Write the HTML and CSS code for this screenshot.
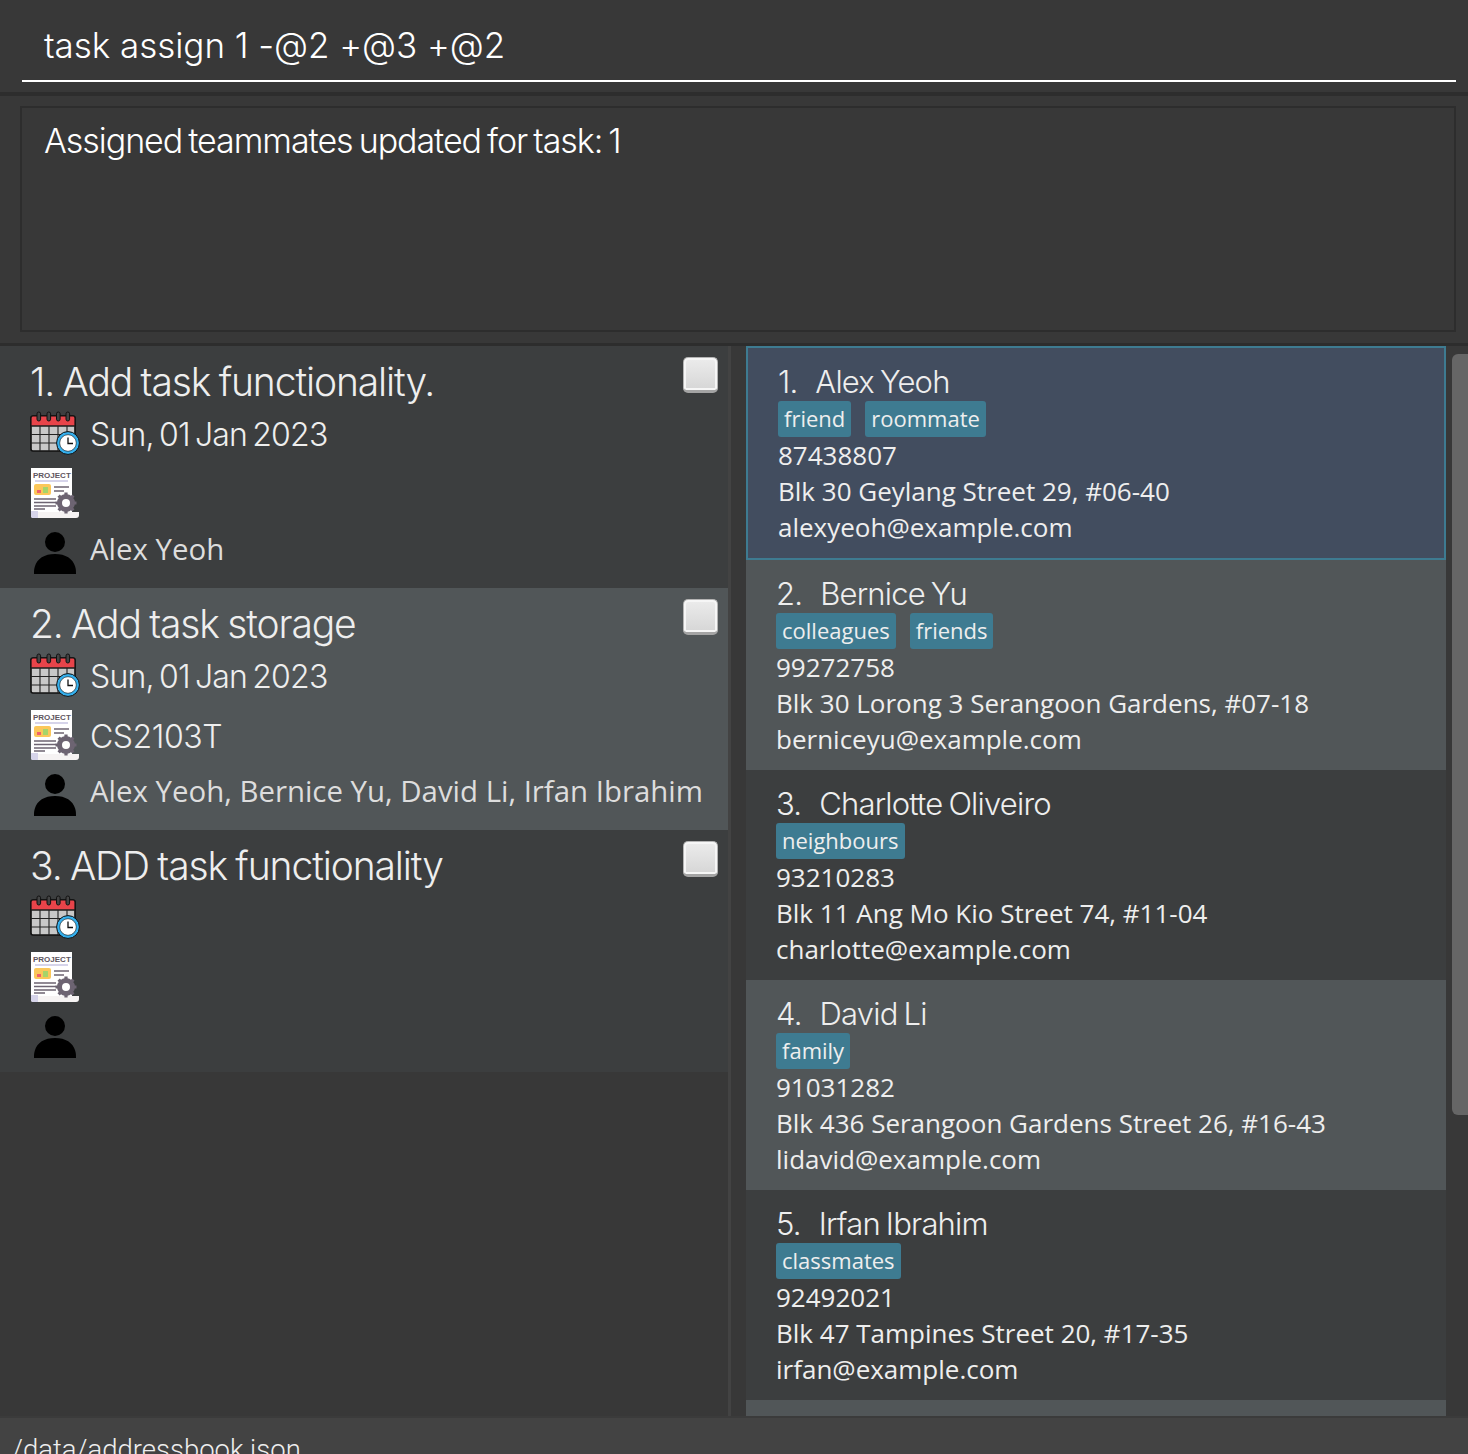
FILE: index.html
```html
<!DOCTYPE html>
<html lang="en">
<head>
<meta charset="utf-8">
<title>Task list</title>
<link rel="stylesheet" href="styles.css">
</head>
<body>
<svg class="defs" width="0" height="0" aria-hidden="true">
  <symbol id="cal" viewBox="0 0 50 44">
    <rect x="1" y="5" width="44" height="35" rx="2" fill="#c8c8c8" stroke="#111" stroke-width="1.600"/>
    <path d="M1 15V7a2 2 0 0 1 2-2h40a2 2 0 0 1 2 2v8z" fill="#e8444a" stroke="#111" stroke-width="1.200"/>
    <path d="M1 15h44M1 23.500h44M1 32h44M10 15v25M19 15v25M28 15v25M37 15v25" stroke="#222" stroke-width="1.100" fill="none"/>
    <g fill="#444" stroke="#111" stroke-width="1"><rect x="7" y="1" width="3.600" height="9" rx="1.800"/><rect x="17" y="1" width="3.600" height="9" rx="1.800"/><rect x="26.500" y="1" width="3.600" height="9" rx="1.800"/><rect x="36" y="1" width="3.600" height="9" rx="1.800"/></g>
    <circle cx="38" cy="32" r="11.400" fill="#35b0ee" stroke="#111" stroke-width="1"/>
    <circle cx="38" cy="32" r="8.300" fill="#fff" stroke="#111" stroke-width="0.600"/>
    <path d="M38 26.500v6h5" fill="none" stroke="#111" stroke-width="1.300"/>
  </symbol>
  <symbol id="proj" viewBox="0 0 48 50">
    <path d="M0 0h41v44H0z" fill="#fff"/>
    <path d="M0 44h48v3a3 3 0 0 1-3 3H2a2 2 0 0 1-2-2z" fill="#f6f3f3"/>
    <path d="M0 43h7v7H2a2 2 0 0 1-2-2z" fill="#d6d4ea"/>
    <rect x="4" y="12" width="33" height="2" fill="#d6d4ea"/>
    <rect x="3" y="16" width="17" height="11" rx="2" fill="#fbc75a"/>
    <rect x="6" y="22" width="4" height="3" fill="#f0606a"/>
    <rect x="12" y="19" width="5" height="6" fill="#a6d46a"/>
    <path d="M23 19h15M23 23h10M3 31h22M3 34.500h22M3 38h22M3 41h11" stroke="#6d6472" stroke-width="1.300"/>
    <circle cx="35" cy="35" r="6.500" fill="none" stroke="#6d6472" stroke-width="5"/>
    <path d="M35 24.500v4M35 41.500v4M24.500 35h4M41.500 35h4M27.600 27.600l2.800 2.800M39.600 39.600l2.800 2.800M42.400 27.600l-2.800 2.800M30.400 39.600l-2.800 2.800" stroke="#6d6472" stroke-width="3.200"/>
  </symbol>
  <symbol id="user" viewBox="0 0 44 44">
    <circle cx="22" cy="10.500" r="10.500" fill="#000"/>
    <path d="M0 44c0-3 0-5 1-8 2-8 10-13 21-13s19 5 21 13c1 3 1 5 1 8z" fill="#000"/>
  </symbol>
</svg>

<main class="app">
  <section class="command">
    <div class="command-text">task assign 1 -@2 +@3 +@2</div>
  </section>

  <section class="result">
    <div class="result-box">Assigned teammates updated for task: 1</div>
  </section>

  <section class="lists">
    <div class="tasks">
      <article class="task">
        <div class="task-main">
          <h2 class="task-title">1. Add task functionality.</h2>
          <div class="task-row row-date"><svg class="ic-cal"><use href="#cal"/></svg><span class="date">Sun, 01 Jan 2023</span></div>
          <div class="task-row row-proj"><svg class="ic-proj" viewBox="0 0 48 50"><use href="#proj"/><text x="2" y="10" class="proj-text">PROJECT</text></svg></div>
          <div class="task-row row-user"><svg class="ic-user"><use href="#user"/></svg><span class="people">Alex Yeoh</span></div>
        </div>
        <span class="check"></span>
      </article>
      <article class="task even">
        <div class="task-main">
          <h2 class="task-title">2. Add task storage</h2>
          <div class="task-row row-date"><svg class="ic-cal"><use href="#cal"/></svg><span class="date">Sun, 01 Jan 2023</span></div>
          <div class="task-row row-proj"><svg class="ic-proj" viewBox="0 0 48 50"><use href="#proj"/><text x="2" y="10" class="proj-text">PROJECT</text></svg><span class="date code">CS2103T</span></div>
          <div class="task-row row-user"><svg class="ic-user"><use href="#user"/></svg><span class="people">Alex Yeoh, Bernice Yu, David Li, Irfan Ibrahim</span></div>
        </div>
        <span class="check"></span>
      </article>
      <article class="task">
        <div class="task-main">
          <h2 class="task-title">3. ADD task functionality</h2>
          <div class="task-row row-date"><svg class="ic-cal"><use href="#cal"/></svg></div>
          <div class="task-row row-proj"><svg class="ic-proj" viewBox="0 0 48 50"><use href="#proj"/><text x="2" y="10" class="proj-text">PROJECT</text></svg></div>
          <div class="task-row row-user"><svg class="ic-user"><use href="#user"/></svg></div>
        </div>
        <span class="check"></span>
      </article>
    </div>

    <div class="persons">
      <article class="person selected">
        <h3 class="person-name"><span>1.</span><span>Alex Yeoh</span></h3>
        <div class="tags"><span class="tag">friend</span><span class="tag">roommate</span></div>
        <p class="line">87438807</p>
        <p class="line">Blk 30 Geylang Street 29, #06-40</p>
        <p class="line">alexyeoh@example.com</p>
      </article>
      <article class="person even">
        <h3 class="person-name"><span>2.</span><span>Bernice Yu</span></h3>
        <div class="tags"><span class="tag">colleagues</span><span class="tag">friends</span></div>
        <p class="line">99272758</p>
        <p class="line">Blk 30 Lorong 3 Serangoon Gardens, #07-18</p>
        <p class="line">berniceyu@example.com</p>
      </article>
      <article class="person">
        <h3 class="person-name"><span>3.</span><span>Charlotte Oliveiro</span></h3>
        <div class="tags"><span class="tag">neighbours</span></div>
        <p class="line">93210283</p>
        <p class="line">Blk 11 Ang Mo Kio Street 74, #11-04</p>
        <p class="line">charlotte@example.com</p>
      </article>
      <article class="person even">
        <h3 class="person-name"><span>4.</span><span>David Li</span></h3>
        <div class="tags"><span class="tag">family</span></div>
        <p class="line">91031282</p>
        <p class="line">Blk 436 Serangoon Gardens Street 26, #16-43</p>
        <p class="line">lidavid@example.com</p>
      </article>
      <article class="person">
        <h3 class="person-name"><span>5.</span><span>Irfan Ibrahim</span></h3>
        <div class="tags"><span class="tag">classmates</span></div>
        <p class="line">92492021</p>
        <p class="line">Blk 47 Tampines Street 20, #17-35</p>
        <p class="line">irfan@example.com</p>
      </article>
      <article class="person even"></article>
    </div>

    <div class="scrolltrack"><div class="scrollthumb"></div></div>
  </section>

  <footer class="status">/data/addressbook.json</footer>
</main>
</body>
</html>
```
FILE: styles.css
```css
* { box-sizing: border-box; }
html, body { margin: 0; padding: 0; background: #383838; }
.defs { display: none; }
.proj-text { font: 700 8px "Liberation Sans", sans-serif; fill: #5e5560; }
.app {
  width: 1468px; height: 1454px; overflow: hidden;
  display: flex; flex-direction: column;
  background: #383838; color: #fff;
  font-family: "Inter", sans-serif;
}
.command {
  height: 96px; flex: none; padding: 0 12px 0 22px;
  border-bottom: 4px solid #2d2d2d;
}
.command-text {
  height: 82px; padding: 22px 0 0 22px;
  border-bottom: 2px solid #fff;
  font: 300 35px/46px "Inter", sans-serif;
  letter-spacing: -0.05px; color: #fff;
}
.result {
  height: 250px; flex: none; padding: 10px 12px 10px 20px;
  border-bottom: 3px solid #2d2d2d;
}
.result-box {
  height: 226px; border: 2px solid #2d2d2d;
  padding: 13px 0 0 22px;
  font: 300 34px/40px "Inter", sans-serif;
  letter-spacing: -1.05px; word-spacing: -2.4px; color: #fff;
}
.lists { flex: 1; min-height: 0; display: flex; align-items: stretch; }
.tasks {
  width: 731px; flex: none; border-right: 3px solid #434343;
  padding-top: 0;
}
.task {
  height: 242px; display: flex; justify-content: space-between;
  padding: 0 10px 0 30px; background: #3c3e3f;
}
.task.even { background: #515658; }
.task-main { min-width: 0; display: flex; flex-direction: column; }
.task-title {
  margin: 12px 0 0; height: 48px;
  font: 300 39px/48px "Inter", sans-serif;
  letter-spacing: -1.1px; word-spacing: -1.5px; color: #eee; white-space: nowrap;
}
.task-row { display: flex; align-items: center; }
.row-date { height: 50px; margin-top: 4px; gap: 10px; }
.row-proj { height: 50px; margin-top: 8px; gap: 11px; }
.row-user { height: 46px; margin-top: 8px; gap: 14px; }
.ic-cal { width: 50px; height: 44px; flex: none; margin-bottom: 4px; }
.ic-proj { width: 48px; height: 50px; flex: none; margin-left: 1px; }
.ic-user { width: 42px; height: 42px; flex: none; margin: 8px 0 0 4px; }
.date { font: 300 32px/40px "Inter", sans-serif; letter-spacing: -0.8px; word-spacing: -3px; color: #eee; }
.date.code { padding-top: 4px; letter-spacing: -0.45px; }
.people { font: 400 29.400px/40px "Open Sans", sans-serif; color: #ddd; white-space: nowrap; }
.check {
  width: 35px; height: 36px; margin-top: 11px; flex: none;
  border-radius: 5px; background: linear-gradient(#ececec, #d6d6d6);
  border: 1px solid #b4b4b4; border-bottom: 3px solid #a4a4a4;
  box-shadow: inset 0 0 0 2px #f6f6f6;
}
.persons { width: 715px; flex: none; padding-left: 15px; overflow: hidden; }
.person {
  height: 210px; padding: 14px 0 0 30px;
  background: #3c3e3f; width: 700px;
}
.person.even { background: #515658; }
.person.selected {
  height: 214px; background: #424d5f; border: 2px solid #3e7b91;
  padding: 14px 0 0 30px;
}
.person-name {
  margin: 0; height: 40px; display: flex; gap: 18px;
  font: 300 31px/40px "Inter", sans-serif; letter-spacing: -0.8px; word-spacing: -2px; color: #eee;
}
.tags { display: flex; gap: 14px; height: 36px; margin-top: -1px; }
.tag {
  height: 36px; padding: 0 6px; border-radius: 3px;
  background: #3e7b91; color: #eee;
  font: 400 22px/34px "Open Sans", sans-serif;
}
.line {
  margin: 0; height: 36px; white-space: nowrap;
  font: 400 26px/36px "Open Sans", sans-serif; color: #eee;
}
.scrolltrack { flex: 1; padding: 8px 0 0 6px; }
.scrollthumb { height: 761px; background: #666; border-radius: 6px 0 0 6px; }
.status {
  height: 38px; flex: none; background: #434343;
  border-top: 2px solid #3b3b3b;
  padding: 14px 0 0 12px;
  font: 300 27.500px/36px "Roboto", sans-serif; color: #eee; white-space: nowrap;
}
```
